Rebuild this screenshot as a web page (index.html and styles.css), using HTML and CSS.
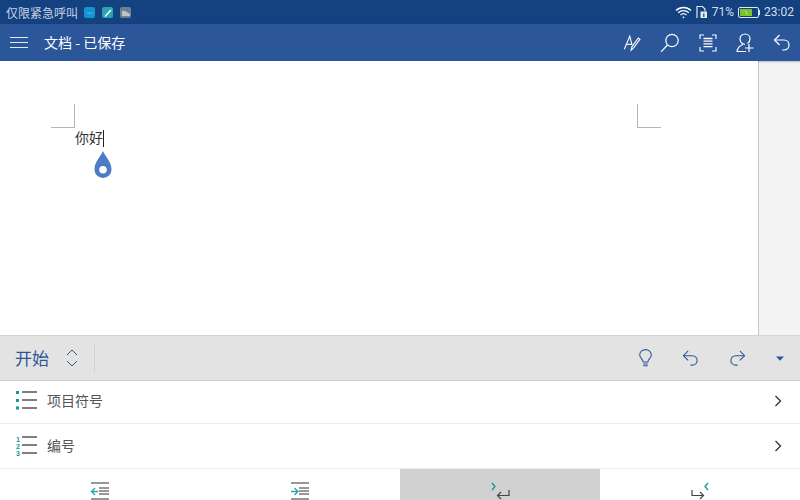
FILE: index.html
```html
<!DOCTYPE html>
<html lang="zh">
<head>
    <meta charset="UTF-8">
    <title>文档</title>
    <link rel="stylesheet" href="styles.css">
</head>
<body>
    <div class="status-bar">
        <div class="status-left">
            <span class="carrier">仅限紧急呼叫</span>
            <span class="notif notif-blue"><svg width="12" height="12" viewBox="0 0 12 12"><path d="M3 6h6" stroke="#5fb6dd" stroke-width="1"/></svg></span>
            <span class="notif notif-teal"><svg width="12" height="12" viewBox="0 0 12 12"><path d="M3 9.500 9 3" stroke="#fff" stroke-width="1.600"/></svg></span>
            <span class="notif notif-grey"><svg width="12" height="12" viewBox="0 0 12 12"><path d="M2 9V4h3l5 3v2z" fill="#b9c4cc"/></svg></span>
        </div>
        <div class="status-right">
            <svg width="17" height="13" viewBox="0 0 17 13" fill="none" stroke="#fff" stroke-width="1.300"><path d="M1 4.500c4.200-4 10.800-4 15 0"/><path d="M3.200 6.800c3-2.800 7.600-2.800 10.600 0"/><path d="M5.500 9c1.700-1.500 4.300-1.500 6 0"/><circle cx="8.500" cy="11.300" r=".9" fill="#fff" stroke="none"/></svg>
            <svg width="12" height="14" viewBox="0 0 12 14"><path d="M1 13V1.500h5.500L9 4v2" fill="none" stroke="#e4eaf3" stroke-width="1.200"/><path d="M4.500 6.500H11V13H4.500z" fill="#e4eaf3"/><path d="M7.200 8.500h1.200V12H7.200z" fill="#14417f"/></svg>
            <span class="percent">71%</span>
            <span class="battery">
                <span class="battery-body"><span class="battery-level" style="width:71%"><svg width="9" height="7" viewBox="0 0 9 7"><path d="M1 1.500 5 3 4.500 4.500 8 6 4 4.800 4.500 3.300z" fill="#fff"/></svg></span></span>
                <span class="battery-tip"></span>
            </span>
            <span class="clock">23:02</span>
        </div>
    </div>

    <div class="app-bar">
        <div class="menu-icon"><span></span><span></span><span></span></div>
        <div class="doc-title">文档 - 已保存</div>
        <div class="app-actions">
            <svg width="18" height="18" viewBox="0 0 20 20" fill="none" stroke="#fff" stroke-width="1.200"><path d="M1.500 17 7.500 2.500 10 12"/><path d="M3.800 11.500H10"/><path d="M9 18l1-4 7-9.500 1.800 1.400-7 9.500z"/></svg>
            <svg width="20" height="20" viewBox="0 0 20 20" fill="none" stroke="#fff" stroke-width="1.200"><circle cx="12" cy="7.500" r="6.200"/><path d="M7.500 12 1 18.800"/></svg>
            <svg width="18" height="18" viewBox="0 0 18 18" fill="none" stroke="#fff" stroke-width="1.100"><path d="M1 5V1h4M13 1h4v4M17 13v4h-4M5 17H1v-4"/><path d="M4.500 4.500h9M4.500 7.200h9M4.500 9.900h9M4.500 12.600h9" stroke-width="1.300"/></svg>
            <svg width="18" height="20" viewBox="0 0 18 20" fill="none" stroke="#fff" stroke-width="1.200"><path d="M9 11.500C6 11 4 8.500 4 5.800 4 3 6.200 1 9 1s5 2 5 4.800c0 2-1 3.800-2.500 4.800"/><path d="M7 11.500C4 12.500 1.500 15 1 18.500h9"/><path d="M13 11v8M9 15h8.500"/></svg>
            <svg width="18" height="18" viewBox="0 0 18 18" fill="none" stroke="#fff" stroke-width="1.200"><path d="M6.500 1 1.500 6l5 5"/><path d="M1.500 6H11c3 0 5 2.200 5 5s-2 5-5 5H9"/></svg>
        </div>
    </div>

    <div class="doc-area">
        <div class="page">
            <div class="crop crop-left"></div>
            <div class="crop crop-right"></div>
            <div class="doc-text"><span>你好</span><span class="caret"></span></div>
            <svg class="handle" width="18" height="28" viewBox="0 0 18 28"><path fill-rule="evenodd" d="M9 0c2 5 8.500 10.500 8.500 18.500a8.500 8.500 0 0 1-17 0C.5 10.500 7 5 9 0zM9 15a3.800 3.800 0 1 0 0 7.600A3.800 3.800 0 0 0 9 15z" fill="#4e7cc4"/></svg>
        </div>
        <div class="gutter"></div>
    </div>

    <div class="ribbon">
        <div class="tab-name">开始</div>
        <svg class="tab-switch" width="14" height="20" viewBox="0 0 14 20" fill="none" stroke="#2b579a" stroke-width="1"><path d="M2 7l5-5 5 5M2 13l5 5 5-5"/></svg>
        <div class="ribbon-sep"></div>
        <div class="ribbon-actions">
            <svg width="13" height="18" viewBox="0 0 13 18" fill="none" stroke="#2b579a" stroke-width="1.100"><path d="M4.200 13c0-2.800-3.500-4-3.500-7a5.800 5.400 0 0 1 11.600 0c0 3-3.500 4.200-3.500 7z"/><path d="M4.200 15h4.600M4.200 16.800h4.600"/></svg>
            <svg width="17" height="17" viewBox="0 0 18 18" fill="none" stroke="#2b579a" stroke-width="1.100"><path d="M6.500 1 1.500 6l5 5"/><path d="M1.500 6H11c3 0 5 2.200 5 5s-2 5-5 5H9"/></svg>
            <svg width="17" height="17" viewBox="0 0 18 18" fill="none" stroke="#2b579a" stroke-width="1.100"><path d="M11.500 1l5 5-5 5"/><path d="M16.500 6H7c-3 0-5 2.200-5 5s2 5 5 5h2"/></svg>
            <svg width="8" height="5" viewBox="0 0 8 5"><path d="M0 .5h8L4 4.800z" fill="#2b579a"/></svg>
        </div>
    </div>

    <div class="list-row row-bullets">
        <svg width="22" height="20" viewBox="0 0 22 20"><g fill="#0e9c96"><rect x="0" y="0" width="3" height="3"/><rect x="0" y="8" width="3" height="3"/><rect x="0" y="15.500" width="3" height="3"/></g><path d="M6 1h15M6 9h15M6 17h15" stroke="#555" stroke-width="1.300"/></svg>
        <span class="row-label">项目符号</span>
        <svg class="chevron" width="8" height="12" viewBox="0 0 8 12" fill="none" stroke="#333" stroke-width="1.300"><path d="M1.500 1l5 5-5 5"/></svg>
    </div>
    <div class="list-row row-numbers">
        <svg width="22" height="20" viewBox="0 0 22 20"><g fill="#0e9c96" font-size="7" font-weight="700" font-family="Liberation Sans, sans-serif"><text x="0" y="6">1</text><text x="0" y="13">2</text><text x="0" y="20">3</text></g><path d="M6 1h15M6 9h15M6 17h15" stroke="#555" stroke-width="1.300"/></svg>
        <span class="row-label">编号</span>
        <svg class="chevron" width="8" height="12" viewBox="0 0 8 12" fill="none" stroke="#333" stroke-width="1.300"><path d="M1.500 1l5 5-5 5"/></svg>
    </div>

    <div class="bottom-row">
        <div class="bottom-cell">
            <svg width="20" height="18" viewBox="0 0 20 18" fill="none"><path d="M1 1h18M9 6h10M9 9h10M9 12h10M1 17h18" stroke="#777" stroke-width="1.300"/><path d="M5 6 1.500 9.500 5 13M1.500 9.500H8" stroke="#2aa9a2" stroke-width="1.300"/></svg>
        </div>
        <div class="bottom-cell">
            <svg width="20" height="18" viewBox="0 0 20 18" fill="none"><path d="M1 1h18M9 6h10M9 9h10M9 12h10M1 17h18" stroke="#777" stroke-width="1.300"/><path d="M4.500 6 8 9.500 4.500 13M1 9.500h6.500" stroke="#2aa9a2" stroke-width="1.300"/></svg>
        </div>
        <div class="bottom-cell active">
            <svg width="20" height="18" viewBox="0 0 20 18" fill="none"><path d="M2 1l3 3.500L2 8" stroke="#12998f" stroke-width="1.300"/><path d="M19 8v5.500H8M11 10l-3.500 3.500L11 17" stroke="#444" stroke-width="1.200"/></svg>
        </div>
        <div class="bottom-cell">
            <svg width="20" height="18" viewBox="0 0 20 18" fill="none"><path d="M18 1l-3 3.500L18 8" stroke="#12998f" stroke-width="1.300"/><path d="M2 8v5.500h11M10 10l3.500 3.500L10 17" stroke="#444" stroke-width="1.200"/></svg>
        </div>
    </div>
</body>
</html>
```

FILE: styles.css
```css
* {
    margin: 0;
    padding: 0;
    box-sizing: border-box;
}

body {
    width: 800px;
    height: 500px;
    overflow: hidden;
    background: white;
    font-family: "Noto Sans CJK SC", "Liberation Sans", sans-serif;
    display: flex;
    flex-direction: column;
}

svg {
    display: block;
    flex-shrink: 0;
}

.status-bar {
    height: 24px;
    flex-shrink: 0;
    background: #14417f;
    color: #c9d5e6;
    display: flex;
    justify-content: space-between;
    align-items: center;
    padding: 0 6px;
    font-size: 12px;
}

.status-left, .status-right {
    display: flex;
    align-items: center;
}

.carrier {
    margin-right: 6px;
    white-space: nowrap;
}

.notif {
    width: 11px;
    height: 11px;
    border-radius: 2px;
    margin-right: 7px;
    overflow: hidden;
}

.notif-blue { background: #1396cf; }
.notif-teal { background: #27a5b2; }
.notif-grey { background: #6e7f8f; }

.status-right {
    gap: 4px;
    color: #d5deeb;
    font-family: Roboto, sans-serif;
}

.battery {
    width: 22px;
    display: flex;
    align-items: center;
}

.battery-body {
    flex: 1;
    height: 11px;
    border: 1px solid #dfe6f0;
    border-radius: 2px;
    padding: 1px;
    display: flex;
}

.battery-tip {
    width: 1px;
    height: 5px;
    background: #dfe6f0;
}

.battery-level {
    display: flex;
    align-items: center;
    justify-content: center;
    background: #7cc42e;
}

.percent, .clock {
    font-size: 12px;
}

.app-bar {
    height: 37px;
    flex-shrink: 0;
    background: #2b579a;
    color: white;
    display: flex;
    align-items: center;
    padding: 0 9px 0 10px;
    box-shadow: 0 1px 2px rgba(0, 0, 0, 0.25);
    position: relative;
}

.menu-icon {
    width: 18px;
    display: flex;
    flex-direction: column;
    gap: 4px;
    margin-right: 16px;
}

.menu-icon span {
    height: 1px;
    background: #e3eaf4;
}

.doc-title {
    font-size: 14px;
    padding-bottom: 2px;
}

.app-actions {
    margin-left: auto;
    display: flex;
    align-items: center;
    gap: 19px;
}

.doc-area {
    flex: 1;
    display: flex;
    min-height: 0;
}

.page {
    flex: 1;
    position: relative;
    background: white;
}

.gutter {
    width: 42px;
    background: #f4f4f4;
    border-left: 1px solid #c9c9c9;
}

.crop {
    position: absolute;
    top: 43px;
    width: 24px;
    height: 24px;
    border-bottom: 1px solid #b5b5b5;
}

.crop-left {
    left: 51px;
    border-right: 1px solid #b5b5b5;
}

.crop-right {
    left: 637px;
    border-left: 1px solid #b5b5b5;
}

.doc-text {
    position: absolute;
    left: 75px;
    top: 66px;
    display: flex;
    align-items: center;
    font-size: 14px;
    line-height: 20px;
    color: #333;
}

.caret {
    width: 1px;
    height: 17px;
    margin-top: 2px;
    background: #222;
}

.handle {
    position: absolute;
    left: 94px;
    top: 90px;
}

.ribbon {
    height: 46px;
    flex-shrink: 0;
    background: #e3e3e3;
    border-top: 1px solid #d4d4d4;
    border-bottom: 1px solid #cfcfcf;
    display: flex;
    align-items: center;
    padding: 0 16px 0 15px;
}

.tab-name {
    font-size: 17px;
    color: #2b579a;
    margin-right: 16px;
    padding-bottom: 2px;
}

.ribbon-sep {
    width: 1px;
    height: 29px;
    background: #d2d2d2;
    margin-left: 15px;
}

.ribbon-actions {
    margin-left: auto;
    display: flex;
    align-items: center;
    gap: 30px;
}

.list-row {
    flex-shrink: 0;
    display: flex;
    align-items: center;
    border-bottom: 1px solid #ececec;
    padding: 0 16px;
}

.row-bullets {
    height: 43px;
    padding-bottom: 2px;
}

.row-numbers { height: 45px; }

.row-label {
    margin-left: 9px;
    padding-bottom: 2px;
    font-size: 14px;
    color: #555;
}

.chevron {
    margin-left: auto;
    margin-right: 2px;
}

.bottom-row {
    height: 31px;
    flex-shrink: 0;
    display: grid;
    grid-template-columns: repeat(4, 1fr);
}

.bottom-cell {
    display: flex;
    justify-content: center;
    padding-top: 13px;
}

.bottom-cell.active {
    background: #d1d1d1;
}
```
